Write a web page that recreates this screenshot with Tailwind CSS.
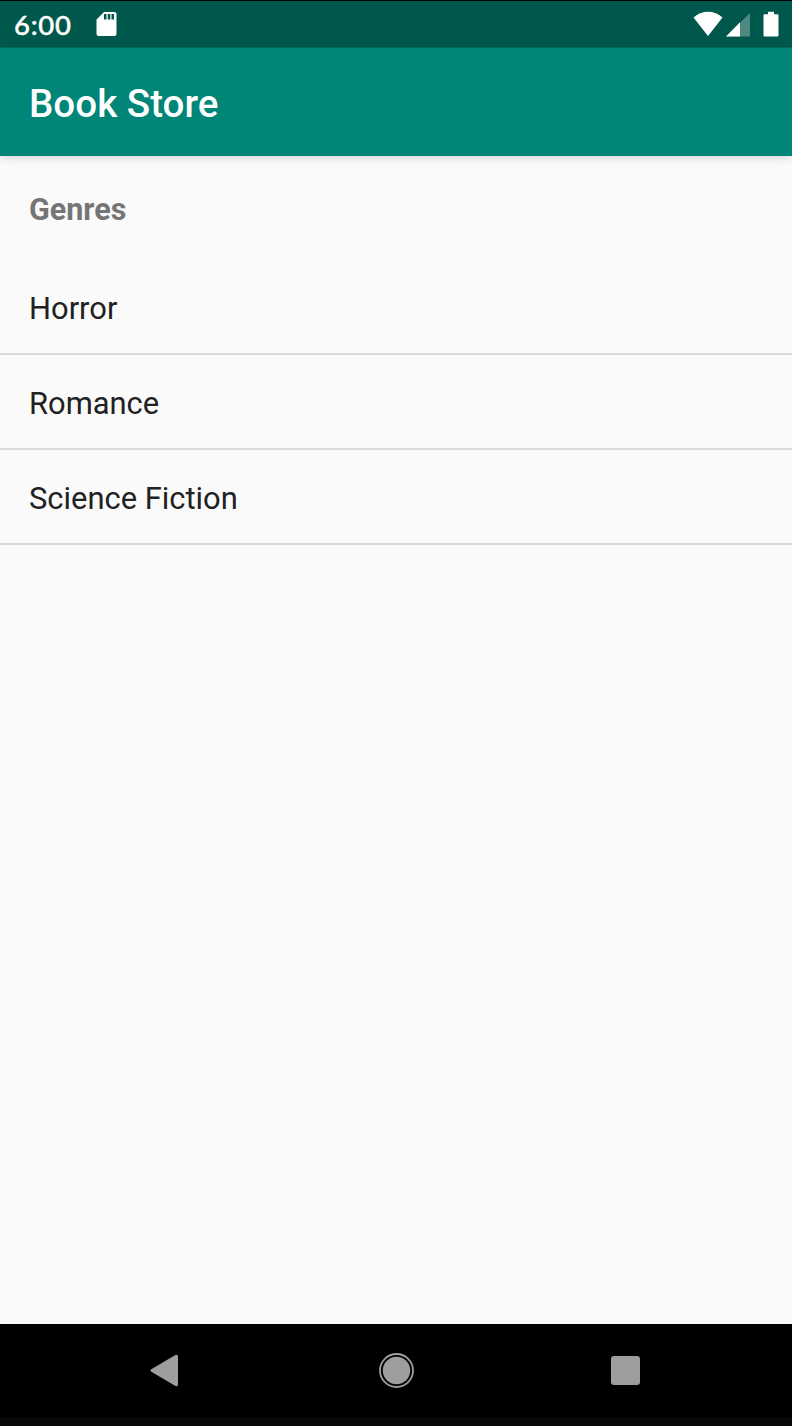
<!DOCTYPE html>
<html lang="en">
<head>
<meta charset="utf-8">
<title>Book Store</title>
<script src="https://cdn.jsdelivr.net/npm/@tailwindcss/browser@4"></script>
</head>
<body class="flex h-[1426px] w-[792px] flex-col overflow-hidden bg-[#fafafa] font-['Roboto',sans-serif]">
  <div class="flex h-[47px] shrink-0 items-center border-t border-black bg-[#00574b] pl-[14px] pr-[13px] text-white">
    <span class="w-[82px] pt-[2px] font-['Lato',sans-serif] text-[27.500px] leading-[46px] font-medium tracking-[0.700px] [-webkit-text-stroke:0.4px_white]">6:00</span>
    <svg class="h-[26px] w-[22px]" viewBox="0 0 22 26" fill="currentColor"><path fill-rule="evenodd" d="M8 1h10.500q2 0 2 2v20q0 2-2 2h-16q-2 0-2-2V8.500zM8 3v5.500h2.500V3zM11.800 3v5.500h2.500V3zM15.500 3v5.500h2.500V3z"/></svg>
    <svg class="ml-auto h-[26px] w-[30px]" viewBox="0 0 30 26" fill="currentColor"><path d="M15 25L.5 6.500Q7 .8 15 .8T29.500 6.500z"/></svg>
    <svg class="ml-[3px] h-[26px] w-[24px]" viewBox="0 0 24 26" fill="currentColor"><path fill-opacity=".3" d="M0 25.500L24 2v23.500z"/><path d="M0 25.500L14 11.200v14.300z"/></svg>
    <svg class="ml-[13px] h-[26px] w-[16px]" viewBox="0 0 16 26" fill="currentColor"><path d="M5 .8h6v2.400h3.500q1 0 1 1v20.300q0 1-1 1h-13q-1 0-1-1V4.200q0-1 1-1H5z"/></svg>
  </div>
  <header class="relative flex h-[109px] shrink-0 items-center border-t border-[#006c60] bg-[#008577] px-[29px] shadow-[0_3px_8px_-1px_rgba(0,0,0,0.14)]">
    <h1 class="pt-[4px] text-[38.600px] leading-none font-medium text-white">Book Store</h1>
  </header>
  <main class="flex-1">
    <h2 class="flex h-[104px] items-center px-[29px] pt-[4px] text-[30.500px] leading-none font-bold text-[#757575]">Genres</h2>
    <ul class="text-[30.900px] leading-none text-[#212121]">
      <li class="flex h-[95px] items-center border-b-2 border-[#dadada] px-[29px] pt-[5px]">Horror</li>
      <li class="flex h-[95px] items-center border-b-2 border-[#dadada] px-[29px] pt-[5px]">Romance</li>
      <li class="flex h-[95px] items-center border-b-2 border-[#dadada] px-[29px] pt-[5px]">Science Fiction</li>
    </ul>
  </main>
  <nav class="flex h-[102px] shrink-0 items-center justify-between border-b-[9px] border-[#080808] bg-black pl-[150px] pr-[152px] text-[#9e9e9e]">
    <svg class="h-[33px] w-[31px]" viewBox="0 0 31 33" fill="currentColor"><path d="M1.300 15.300L25 1.200q3-1.300 3 1.500v27.600q0 2.800-3 1.500L1.300 17.700q-1.800-1.200 0-2.400z"/></svg>
    <svg class="h-[35px] w-[35px]" viewBox="0 0 35 35"><circle cx="17.500" cy="17.500" r="16.500" fill="none" stroke="currentColor" stroke-width="1.800"/><circle cx="17.500" cy="17.500" r="13.700" fill="currentColor"/></svg>
    <span class="size-[29px] rounded-[3px] bg-[#9e9e9e]"></span>
  </nav>
</body>
</html>
